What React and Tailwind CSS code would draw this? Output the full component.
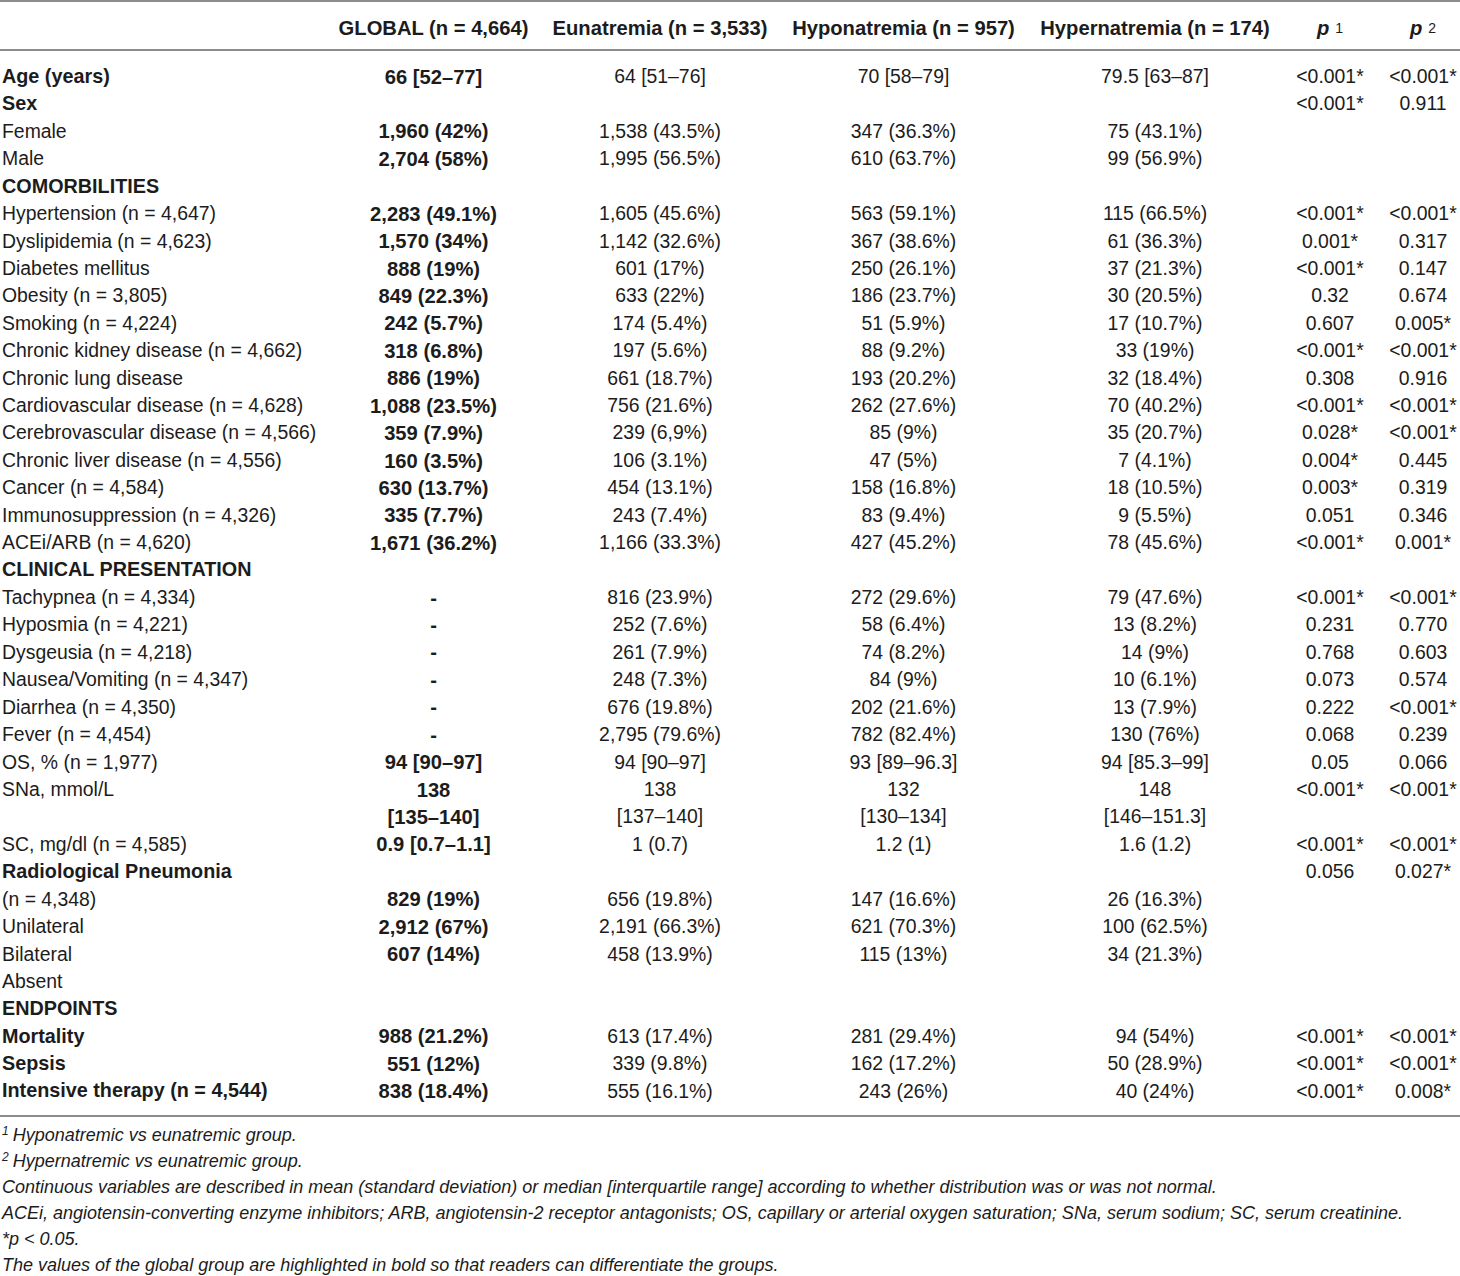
const cols = "grid grid-cols-[327px_213px_240px_247px_256px_94px_92px] w-[1469px]";

const rows = [
  ["Age (years)", "66 [52–77]", "64 [51–76]", "70 [58–79]", "79.5 [63–87]", "<0.001*", "<0.001*", true],
  ["Sex", "", "", "", "", "<0.001*", "0.911", true],
  ["Female", "1,960 (42%)", "1,538 (43.5%)", "347 (36.3%)", "75 (43.1%)", "", ""],
  ["Male", "2,704 (58%)", "1,995 (56.5%)", "610 (63.7%)", "99 (56.9%)", "", ""],
  ["COMORBILITIES", "", "", "", "", "", "", true],
  ["Hypertension (n = 4,647)", "2,283 (49.1%)", "1,605 (45.6%)", "563 (59.1%)", "115 (66.5%)", "<0.001*", "<0.001*"],
  ["Dyslipidemia (n = 4,623)", "1,570 (34%)", "1,142 (32.6%)", "367 (38.6%)", "61 (36.3%)", "0.001*", "0.317"],
  ["Diabetes mellitus", "888 (19%)", "601 (17%)", "250 (26.1%)", "37 (21.3%)", "<0.001*", "0.147"],
  ["Obesity (n = 3,805)", "849 (22.3%)", "633 (22%)", "186 (23.7%)", "30 (20.5%)", "0.32", "0.674"],
  ["Smoking (n = 4,224)", "242 (5.7%)", "174 (5.4%)", "51 (5.9%)", "17 (10.7%)", "0.607", "0.005*"],
  ["Chronic kidney disease (n = 4,662)", "318 (6.8%)", "197 (5.6%)", "88 (9.2%)", "33 (19%)", "<0.001*", "<0.001*"],
  ["Chronic lung disease", "886 (19%)", "661 (18.7%)", "193 (20.2%)", "32 (18.4%)", "0.308", "0.916"],
  ["Cardiovascular disease (n = 4,628)", "1,088 (23.5%)", "756 (21.6%)", "262 (27.6%)", "70 (40.2%)", "<0.001*", "<0.001*"],
  ["Cerebrovascular disease (n = 4,566)", "359 (7.9%)", "239 (6,9%)", "85 (9%)", "35 (20.7%)", "0.028*", "<0.001*"],
  ["Chronic liver disease (n = 4,556)", "160 (3.5%)", "106 (3.1%)", "47 (5%)", "7 (4.1%)", "0.004*", "0.445"],
  ["Cancer (n = 4,584)", "630 (13.7%)", "454 (13.1%)", "158 (16.8%)", "18 (10.5%)", "0.003*", "0.319"],
  ["Immunosuppression (n = 4,326)", "335 (7.7%)", "243 (7.4%)", "83 (9.4%)", "9 (5.5%)", "0.051", "0.346"],
  ["ACEi/ARB (n = 4,620)", "1,671 (36.2%)", "1,166 (33.3%)", "427 (45.2%)", "78 (45.6%)", "<0.001*", "0.001*"],
  ["CLINICAL PRESENTATION", "", "", "", "", "", "", true],
  ["Tachypnea (n = 4,334)", "-", "816 (23.9%)", "272 (29.6%)", "79 (47.6%)", "<0.001*", "<0.001*"],
  ["Hyposmia (n = 4,221)", "-", "252 (7.6%)", "58 (6.4%)", "13 (8.2%)", "0.231", "0.770"],
  ["Dysgeusia (n = 4,218)", "-", "261 (7.9%)", "74 (8.2%)", "14 (9%)", "0.768", "0.603"],
  ["Nausea/Vomiting (n = 4,347)", "-", "248 (7.3%)", "84 (9%)", "10 (6.1%)", "0.073", "0.574"],
  ["Diarrhea (n = 4,350)", "-", "676 (19.8%)", "202 (21.6%)", "13 (7.9%)", "0.222", "<0.001*"],
  ["Fever (n = 4,454)", "-", "2,795 (79.6%)", "782 (82.4%)", "130 (76%)", "0.068", "0.239"],
  ["OS, % (n = 1,977)", "94 [90–97]", "94 [90–97]", "93 [89–96.3]", "94 [85.3–99]", "0.05", "0.066"],
  ["SNa, mmol/L", "138", "138", "132", "148", "<0.001*", "<0.001*"],
  ["", "[135–140]", "[137–140]", "[130–134]", "[146–151.3]", "", ""],
  ["SC, mg/dl (n = 4,585)", "0.9 [0.7–1.1]", "1 (0.7)", "1.2 (1)", "1.6 (1.2)", "<0.001*", "<0.001*"],
  ["Radiological Pneumonia", "", "", "", "", "0.056", "0.027*", true],
  ["(n = 4,348)", "829 (19%)", "656 (19.8%)", "147 (16.6%)", "26 (16.3%)", "", ""],
  ["Unilateral", "2,912 (67%)", "2,191 (66.3%)", "621 (70.3%)", "100 (62.5%)", "", ""],
  ["Bilateral", "607 (14%)", "458 (13.9%)", "115 (13%)", "34 (21.3%)", "", ""],
  ["Absent", "", "", "", "", "", ""],
  ["ENDPOINTS", "", "", "", "", "", "", true],
  ["Mortality", "988 (21.2%)", "613 (17.4%)", "281 (29.4%)", "94 (54%)", "<0.001*", "<0.001*", true],
  ["Sepsis", "551 (12%)", "339 (9.8%)", "162 (17.2%)", "50 (28.9%)", "<0.001*", "<0.001*", true],
  ["Intensive therapy (n = 4,544)", "838 (18.4%)", "555 (16.1%)", "243 (26%)", "40 (24%)", "<0.001*", "0.008*", true],
];

const notes = [
  <><sup className="text-[12px] mr-[4px]">1</sup>Hyponatremic vs eunatremic group.</>,
  <><sup className="text-[12px] mr-[4px]">2</sup>Hypernatremic vs eunatremic group.</>,
  "Continuous variables are described in mean (standard deviation) or median [interquartile range] according to whether distribution was or was not normal.",
  "ACEi, angiotensin-converting enzyme inhibitors; ARB, angiotensin-2 receptor antagonists; OS, capillary or arterial oxygen saturation; SNa, serum sodium; SC, serum creatinine.",
  "*p < 0.05.",
  "The values of the global group are highlighted in bold so that readers can differentiate the groups.",
];

function Row({ r }) {
  const [label, g, e, ho, he, p1, p2, boldLabel] = r;
  return (
    <div className={`${cols} h-[27.43px] items-center leading-none`}>
      <div className={`pl-[2px] whitespace-nowrap ${boldLabel ? "font-bold text-[19.8px]" : ""}`}>{label}</div>
      <div className="text-center font-bold text-[20.2px] whitespace-nowrap">{g}</div>
      <div className="text-center whitespace-nowrap">{e}</div>
      <div className="text-center whitespace-nowrap">{ho}</div>
      <div className="text-center whitespace-nowrap">{he}</div>
      <div className="text-center whitespace-nowrap">{p1}</div>
      <div className="text-center whitespace-nowrap">{p2}</div>
    </div>
  );
}

export default function App() {
  return (
    <div className="w-[1460px] h-[1276px] overflow-hidden bg-white text-[#1c1c1c] font-['Liberation_Sans',Arial,sans-serif] text-[19.4px]">
      <div className="border-t-2 border-[#8c8c8c]" />
      <div className={`${cols} h-[49px] pt-[5px] items-center font-bold text-[20.2px] border-b-2 border-[#8c8c8c] leading-none`}>
        <div />
        <div className="text-center whitespace-nowrap">GLOBAL (n = 4,664)</div>
        <div className="text-center whitespace-nowrap">Eunatremia (n = 3,533)</div>
        <div className="text-center whitespace-nowrap">Hyponatremia (n = 957)</div>
        <div className="text-center whitespace-nowrap">Hypernatremia (n = 174)</div>
        <div className="text-center whitespace-nowrap">
          <span className="italic">p</span>
          <sup className="font-normal text-[14px] ml-[6px] relative -top-[2px]">1</sup>
        </div>
        <div className="text-center whitespace-nowrap">
          <span className="italic">p</span>
          <sup className="font-normal text-[14px] ml-[6px] relative -top-[2px]">2</sup>
        </div>
      </div>
      <div className="pt-[12px] pb-[10px] border-b-2 border-[#8c8c8c]">
        {rows.map((r, i) => (
          <Row key={i} r={r} />
        ))}
      </div>
      <div className="pt-[5px] italic text-[18px] leading-[26px] pl-[2px]">
        {notes.map((n, i) => (
          <div key={i} className="whitespace-nowrap">{n}</div>
        ))}
      </div>
    </div>
  );
}
